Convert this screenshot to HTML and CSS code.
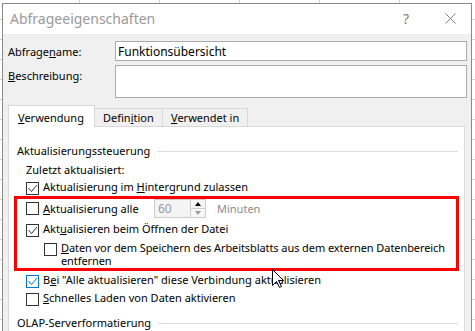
FILE: index.html
```html
<!DOCTYPE html>
<html lang="de">
<head>
    <meta charset="UTF-8">
    <meta name="viewport" content="width=device-width, initial-scale=1.0">
    <title>Abfrageeigenschaften</title>
    <link rel="stylesheet" href="styles.css">
</head>
<body>
    <div class="dialog">
        <div class="titlebar">
            <span class="title">Abfrageeigenschaften</span>
            <span class="help">?</span>
            <svg class="close" width="11" height="11" viewBox="0 0 11 11">
                <path d="M0.5 0.5 L10.5 10.5 M10.5 0.5 L0.5 10.5" stroke="#808080" stroke-width="1" fill="none"/>
            </svg>
        </div>

        <div class="dialog-body">
            <div class="field-row">
                <span class="field-label">Abfrage<u>n</u>ame:</span>
                <div class="input">Funktionsübersicht</div>
            </div>
            <div class="field-row">
                <span class="field-label"><u>B</u>eschreibung:</span>
                <div class="input textarea"></div>
            </div>

            <div class="tabs">
                <div class="tab active"><u>V</u>erwendung</div>
                <div class="tab tab-def">Defin<u>i</u>tion</div>
                <div class="tab tab-used"><u>V</u>erwendet in</div>
            </div>

            <div class="panel">
                <div class="group-title"><span>Aktualisierungssteuerung</span></div>
                <div class="info-row">Zuletzt aktualisiert:</div>

                <div class="check-row">
                    <svg class="cb" width="13" height="13" viewBox="0 0 13 13"><rect x="0.5" y="0.5" width="12" height="12" fill="#fff" stroke="#333"/><polyline points="2.5,6 5.5,9.5 11,3" fill="none" stroke="#333"/></svg>
                    <span>Aktualisierung im <u>H</u>intergrund zulassen</span>
                </div>

                <div class="highlight">
                    <div class="check-row interval-row">
                        <svg class="cb" width="13" height="13" viewBox="0 0 13 13"><rect x="0.5" y="0.5" width="12" height="12" fill="#fff" stroke="#333"/></svg>
                        <span class="interval-label"><u>A</u>ktualisierung alle</span>
                        <div class="spin">
                            <span class="spin-value">60</span>
                            <span class="spin-buttons">
                                <span class="spin-up"></span>
                                <span class="spin-down"></span>
                            </span>
                        </div>
                        <span class="spin-unit">Minuten</span>
                    </div>

                    <div class="check-row open-row">
                        <svg class="cb" width="13" height="13" viewBox="0 0 13 13"><rect x="0.5" y="0.5" width="12" height="12" fill="#fff" stroke="#333"/><polyline points="2.5,6 5.5,9.5 11,3" fill="none" stroke="#333"/></svg>
                        <span>Akt<u>u</u>alisieren beim Öffnen der Datei</span>
                    </div>

                    <div class="check-row nested-row">
                        <svg class="cb" width="13" height="13" viewBox="0 0 13 13"><rect x="0.5" y="0.5" width="12" height="12" fill="#fff" stroke="#333"/></svg>
                        <span><u>D</u>aten vor dem Speichern des Arbeitsblatts aus dem externen Datenbereich entfernen</span>
                    </div>
                </div>

                <div class="check-row">
                    <svg class="cb" width="13" height="13" viewBox="0 0 13 13"><rect x="0.5" y="0.5" width="12" height="12" fill="#fff" stroke="#0078d7"/><polyline points="2.5,6 5.5,9.5 11,3" fill="none" stroke="#0078d7"/></svg>
                    <span>B<u>e</u>i "Alle aktualisieren" diese Verbindung aktualisieren</span>
                </div>
                <div class="check-row">
                    <svg class="cb" width="13" height="13" viewBox="0 0 13 13"><rect x="0.5" y="0.5" width="12" height="12" fill="#fff" stroke="#333"/></svg>
                    <span><u>S</u>chnelles Laden von Daten aktivieren</span>
                </div>

                <div class="group-title olap"><span>OLAP-Serverformatierung</span></div>
            </div>
        </div>
    </div>

    <!-- mouse pointer over the dialog -->
    <svg class="pointer" width="13" height="20" viewBox="0 0 13 20">
        <polygon points="0.5,0.5 0.5,16.5 4.5,12.5 7.5,18.5 9.5,17.5 6.5,11.5 11.5,11.5" fill="#fff" stroke="#000" stroke-width="1"/>
    </svg>
</body>
</html>
```

FILE: styles.css
```css
:root {
    --dialog-bg: #f0f0f0;
    --border-light: #d9d9d9;
    --input-border: #ababab;
    --text: #000;
    --muted: #8c8c8c;
    --accent: #0078d7;
    --mark: #ff0000;
}

* {
    margin: 0;
    padding: 0;
    box-sizing: border-box;
}

html {
    height: 331px;
    overflow: hidden;
}

body {
    height: 331px;
    overflow: hidden;
    padding: 3px 0 0 2px;
    font-family: 'Segoe UI', 'Noto Sans', sans-serif;
    font-size: 11px;
    color: var(--text);
    background-color: #fff;
    background-image:
        repeating-linear-gradient(90deg, transparent 0 79px, #d4d4d4 79px 80px),
        repeating-linear-gradient(180deg, transparent 0 19px, #d4d4d4 19px 20px);
}

.dialog {
    width: 470px;
    height: 340px;
    border: 1px solid #8a8a8a;
    background-color: var(--dialog-bg);
}

/* Title bar */
.titlebar {
    display: flex;
    align-items: center;
    height: 30px;
    padding-bottom: 2px;
    background-color: #fff;
}

.title {
    flex: 1;
    padding-left: 7px;
    font-size: 14px;
    color: #999;
}

.help {
    font-size: 14px;
    color: #808080;
    margin-right: 36px;
}

.close {
    margin-right: 15px;
}

/* Body */
.dialog-body {
    padding: 7px 4px 0 5px;
}

.field-row {
    display: flex;
    margin-bottom: 3px;
}

.field-label {
    width: 107px;
    line-height: 21px;
}

.input {
    width: 352px;
    height: 20px;
    border: 1px solid var(--input-border);
    background-color: #fff;
    padding: 1px 0 0 2px;
    line-height: 18px;
    font-size: 12px;
}

.input.textarea {
    height: 33px;
}

/* Tabs */
.tabs {
    display: flex;
    align-items: flex-end;
    margin-top: 7px;
}

.tab {
    height: 18px;
    border: 1px solid var(--border-light);
    border-bottom: none;
    margin-right: -1px;
    padding-left: 8px;
    line-height: 17px;
    background-color: var(--dialog-bg);
}

.tab.active {
    width: 87px;
    height: 22px;
    padding-left: 9px;
    padding-top: 3px;
    margin-bottom: -1px;
    background-color: #fff;
    position: relative;
    z-index: 1;
}

.tab-def {
    width: 69px;
}

.tab-used {
    width: 86px;
}

/* Panel */
.panel {
    width: 457px;
    height: 220px;
    border: 1px solid var(--border-light);
    background-color: #fff;
    padding: 15px 6px 0 0;
}

.group-title {
    display: flex;
    align-items: center;
    padding-left: 8px;
    line-height: 18px;
    margin-bottom: 1px;
}

.group-title::after {
    content: '';
    flex: 1;
    height: 1px;
    margin-left: 7px;
    background-color: #dcdcdc;
}

.group-title.olap {
    margin-top: 7px;
}

.info-row {
    padding-left: 17px;
    line-height: 17px;
}

.check-row {
    display: flex;
    align-items: flex-start;
    padding-left: 17px;
    line-height: 18px;
}

.check-row .cb {
    flex-shrink: 0;
    margin-top: 4px;
    margin-right: 4px;
}

/* Red annotation frame */
.highlight {
    width: 445px;
    margin-left: 5px;
    border: 3px solid var(--mark);
    padding-bottom: 1px;
}

.highlight .check-row {
    padding-left: 9px;
}

.interval-row {
    align-items: center;
    height: 19px;
    line-height: 17px;
}

.interval-row .cb {
    margin-top: 0;
}

.interval-label {
    width: 111px;
}

.spin {
    display: flex;
    width: 52px;
    height: 19px;
    border: 1px solid #cccccc;
    background-color: #f4f4f4;
}

.spin-value {
    flex: 1;
    padding-left: 3px;
    line-height: 17px;
    font-size: 12px;
    color: #9a9a9a;
}

.spin-buttons {
    display: flex;
    flex-direction: column;
    width: 15px;
    border-left: 1px solid #cccccc;
}

.spin-up,
.spin-down {
    flex: 1;
    display: flex;
    align-items: center;
    justify-content: center;
    background-color: #f7f7f7;
}

.spin-up {
    border-bottom: 1px solid #cccccc;
}

.spin-up::after {
    content: '';
    border-left: 3px solid transparent;
    border-right: 3px solid transparent;
    border-bottom: 4px solid #000;
}

.spin-down::after {
    content: '';
    border-left: 3px solid transparent;
    border-right: 3px solid transparent;
    border-top: 4px solid #9a9a9a;
}

.spin-unit {
    margin-left: 11px;
    color: var(--muted);
}

.open-row {
    margin-top: 2px;
}

.nested-row {
    margin-top: 3px;
    padding-left: 27px !important;
    line-height: 13px;
    letter-spacing: -0.08px;
}

.nested-row .cb {
    margin-top: 2px;
}

.pointer {
    position: absolute;
    left: 272px;
    top: 269px;
}
```
